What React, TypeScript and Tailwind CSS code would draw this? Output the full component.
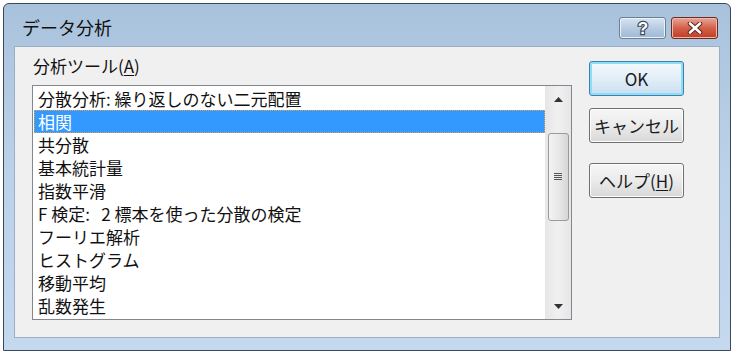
import React from "react";

const items = [
  "分散分析: 繰り返しのない二元配置",
  "相関",
  "共分散",
  "基本統計量",
  "指数平滑",
  "F 検定:   2 標本を使った分散の検定",
  "フーリエ解析",
  "ヒストグラム",
  "移動平均",
  "乱数発生",
];

const font = { fontFamily: '"Noto Sans CJK JP", "Noto Sans", sans-serif' };

const DlgButton = ({ children, focused }: { children: React.ReactNode; focused?: boolean }) => (
  <button
    className={
      focused
        ? "w-[95px] h-[35px] rounded-[3px] border border-[#3c7fb1] bg-gradient-to-b from-[#f4f9fd] via-[#e3eef8] to-[#c9def0] shadow-[inset_0_0_0_2px_#8fdcf5] text-[17px] text-[#1a1a1a] flex items-center justify-center"
        : "w-[95px] h-[35px] rounded-[3px] border border-[#707070] bg-gradient-to-b from-[#f6f6f6] via-[#ebebeb] to-[#d8d8d8] shadow-[inset_0_0_0_1px_#fcfcfc] text-[17px] text-[#1a1a1a] flex items-center justify-center"
    }
  >
    {children}
  </button>
);

export default function App() {
  return (
    <div className="w-[740px] h-[360px] bg-white pt-[3px] pl-[3px]" style={font}>
      <div className="w-[728px] h-[348px] border border-[#3a4a5a] rounded-t-[6px] bg-gradient-to-b from-[#a9c2dc] via-[#bcd2e9] to-[#c4d8ee] flex flex-col">
        {/* title bar */}
        <div className="h-[42px] flex items-start pl-[18px] pr-[12px]">
          <div className="text-[18px] text-[#111] mt-[14px] leading-none">データ分析</div>
          <div className="ml-auto mt-[13px] flex gap-[5px]">
            <div className="w-[47px] h-[22px] rounded-[3px] border border-[#6d7f94] bg-gradient-to-b from-[#d8e5f2] via-[#b8cce2] to-[#9fb8d4] shadow-[inset_0_0_0_1px_#e9f1f9] flex items-center justify-center">
              <svg width="16" height="18" viewBox="0 0 16 18">
                <text
                  x="8"
                  y="15"
                  textAnchor="middle"
                  fontSize="17"
                  fontWeight="bold"
                  fontFamily="Liberation Sans, sans-serif"
                  fill="#ffffff"
                  stroke="#3b4b60"
                  strokeWidth="2.4"
                  paintOrder="stroke"
                >
                  ?
                </text>
              </svg>
            </div>
            <div className="w-[47px] h-[22px] rounded-[3px] border border-[#6e2a20] bg-gradient-to-b from-[#e8a596] via-[#d3604a] to-[#c13c22] shadow-[inset_0_0_0_1px_#f0b9ad] flex items-center justify-center">
              <svg width="16" height="12" viewBox="0 0 16 12">
                <path d="M3 1.5 L13 10.5 M13 1.5 L3 10.5" stroke="#5a2018" strokeWidth="4.5" strokeLinecap="round" />
                <path d="M3 1.5 L13 10.5 M13 1.5 L3 10.5" stroke="#ffffff" strokeWidth="2.6" strokeLinecap="round" />
              </svg>
            </div>
          </div>
        </div>
        {/* client area */}
        <div className="mx-[10px] h-[292px] bg-[#f0f0f0] border border-[#9aaec5] flex">
          <div className="pl-[17px] pt-[9px] flex flex-col">
            <div className="text-[17px] text-[#111] leading-[20px] pl-[1px]">
              分析ツール(<span className="underline underline-offset-2">A</span>)
            </div>
            <div className="mt-[9px] w-[540px] h-[235px] bg-white border border-[#828790] flex">
              <div className="flex-1 flex flex-col pt-[1px] pl-[1px]">
                {items.map((t, i) => (
                  <div
                    key={t}
                    className={
                      i === 1
                        ? "h-[23px] leading-[21px] text-[17px] px-[3px] bg-[#3399ff] text-white border border-dotted border-[#e0a050] whitespace-pre"
                        : "h-[23px] leading-[23px] text-[17px] px-[4px] text-[#111] whitespace-pre"
                    }
                  >
                    {t}
                  </div>
                ))}
              </div>
              {/* scrollbar */}
              <div className="w-[26px] bg-gradient-to-r from-[#e6e6e6] via-[#f0f0f0] to-[#e6e6e6] flex flex-col items-center">
                <div className="h-[26px] w-full flex items-center justify-center">
                  <svg width="9" height="5" viewBox="0 0 9 5">
                    <path d="M0 5 L4.5 0 L9 5 Z" fill="#333" />
                  </svg>
                </div>
                <div className="mt-[21px] w-[21px] h-[88px] rounded-[3px] border border-[#9a9a9a] bg-gradient-to-r from-[#f3f3f3] via-[#e8e8e8] to-[#d6d6d6] flex items-center justify-center">
                  <svg width="8" height="8" viewBox="0 0 8 8">
                    <path d="M0 0.5 H8 M0 2.5 H8 M0 4.5 H8 M0 6.5 H8" stroke="#555" strokeWidth="1" />
                  </svg>
                </div>
                <div className="mt-auto h-[26px] w-full flex items-center justify-center">
                  <svg width="9" height="5" viewBox="0 0 9 5">
                    <path d="M0 0 L4.5 5 L9 0 Z" fill="#333" />
                  </svg>
                </div>
              </div>
            </div>
          </div>
          <div className="ml-[17px] pt-[14px] flex flex-col gap-[12px]">
            <DlgButton focused>OK</DlgButton>
            <DlgButton>キャンセル</DlgButton>
            <div className="mt-[8px]">
              <DlgButton>
                ヘルプ(<span className="underline underline-offset-2">H</span>)
              </DlgButton>
            </div>
          </div>
        </div>
      </div>
    </div>
  );
}
